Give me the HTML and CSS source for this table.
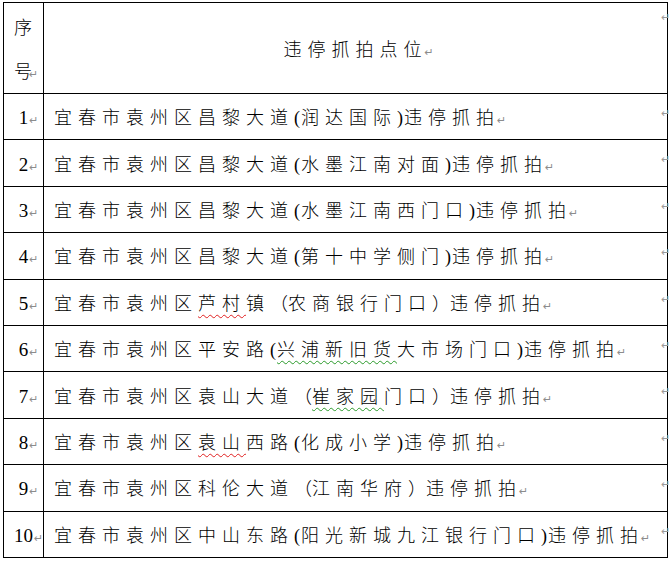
FILE: index.html
```html
<!DOCTYPE html>
<html lang="zh-CN">
<head>
<meta charset="utf-8">
<title>违停抓拍点位</title>
<link rel="stylesheet" href="styles.css">
</head>
<body>
<table class="sheet">
  <colgroup><col class="c-no"><col class="c-loc"></colgroup>
  <tr class="head">
    <td class="no-head"><div class="stack"><span>序</span><span>号<i class="pm">↵</i></span></div></td>
    <td class="loc-head">违停抓拍点位<i class="pm">↵</i></td>
  </tr>
  <tr><td class="no">1<i class="pm">↵</i></td><td class="loc">宜春市袁州区昌黎大道<b class="p">(</b>润达国际<b class="p">)</b>违停抓拍<i class="pm">↵</i></td></tr>
  <tr><td class="no">2<i class="pm">↵</i></td><td class="loc">宜春市袁州区昌黎大道<b class="p">(</b>水墨江南对面<b class="p">)</b>违停抓拍<i class="pm">↵</i></td></tr>
  <tr><td class="no">3<i class="pm">↵</i></td><td class="loc">宜春市袁州区昌黎大道<b class="p">(</b>水墨江南西门口<b class="p">)</b>违停抓拍<i class="pm">↵</i></td></tr>
  <tr><td class="no">4<i class="pm">↵</i></td><td class="loc">宜春市袁州区昌黎大道<b class="p">(</b>第十中学侧门<b class="p">)</b>违停抓拍<i class="pm">↵</i></td></tr>
  <tr><td class="no">5<i class="pm">↵</i></td><td class="loc">宜春市袁州区<span class="spell">芦村</span>镇<b class="fp">（</b>农商银行门口<b class="fp">）</b>违停抓拍<i class="pm">↵</i></td></tr>
  <tr><td class="no">6<i class="pm">↵</i></td><td class="loc">宜春市袁州区平安路<b class="p">(</b><span class="gram">兴浦新旧货</span>大市场门口<b class="p">)</b>违停抓拍<i class="pm">↵</i></td></tr>
  <tr><td class="no">7<i class="pm">↵</i></td><td class="loc">宜春市袁州区袁山大道<b class="fp">（</b><span class="gram">崔家园</span>门口<b class="fp">）</b>违停抓拍<i class="pm">↵</i></td></tr>
  <tr><td class="no">8<i class="pm">↵</i></td><td class="loc">宜春市袁州区<span class="spell">袁山</span>西路<b class="p">(</b>化成小学<b class="p">)</b>违停抓拍<i class="pm">↵</i></td></tr>
  <tr><td class="no">9<i class="pm">↵</i></td><td class="loc">宜春市袁州区科伦大道<b class="fp">（</b>江南华府<b class="fp">）</b>违停抓拍<i class="pm">↵</i></td></tr>
  <tr><td class="no">10<i class="pm">↵</i></td><td class="loc">宜春市袁州区中山东路<b class="p">(</b>阳光新城九江银行门口<b class="p">)</b>违停抓拍<i class="pm">↵</i></td></tr>
</table>
</body>
</html>
```
FILE: styles.css
```css
html, body {
  margin: 0;
  padding: 0;
  background: #fff;
}
body {
  padding: 2px 0 0 3px;
  font-family: "Liberation Serif", "Noto Sans CJK SC", serif;
  color: #000;
}
.sheet {
  border-collapse: collapse;
  table-layout: fixed;
  width: 665px;
}
.c-no { width: 40px; }
.sheet td {
  border: 1px solid #000;
  padding: 0;
  vertical-align: middle;
  position: relative;
  white-space: nowrap;
  overflow: visible;
}
.head td { height: 90px; }
.sheet tr:not(.head) td {
  height: 46.4px;
  box-sizing: border-box;
  padding-top: 6px;
}
.sheet td.loc::after,
.sheet td.loc-head::after {
  content: "↵";
  position: absolute;
  right: -9px;
  top: 8px;
  font-size: 11px;
  color: #9a9a9a;
  font-family: "DejaVu Sans", sans-serif;
}
.no-head {
  vertical-align: top !important;
}
.stack {
  display: flex;
  flex-direction: column;
  padding: 1px 0 0 10px;
  font-family: "Noto Sans CJK SC", sans-serif;
  font-weight: 300;
  font-size: 18px;
  line-height: 44px;
}
.stack span { display: block; height: 44px; }
.loc-head {
  text-align: center;
  font-family: "Noto Sans CJK SC", sans-serif;
  font-weight: 300;
  font-size: 18px;
  letter-spacing: 6px;
  padding-left: 6px !important;
}
.no {
  text-align: center;
  padding-left: 10px !important;
  font-size: 19px;
  line-height: 24px;
}
.loc {
  padding-left: 10px !important;
  font-family: "Liberation Serif", "Noto Sans CJK SC", serif;
  font-weight: 300;
  font-size: 18px;
  letter-spacing: 6px;
  line-height: 24px;
}
.p {
  font-weight: 300;
  letter-spacing: 1px;
}
.fp {
  font-weight: 300;
  letter-spacing: 0;
}
.pm {
  font-style: normal;
  font-weight: 400;
  font-family: "DejaVu Sans", sans-serif;
  font-size: 11px;
  color: #8c8c8c;
  letter-spacing: 0;
  margin-left: -3px;
}
.no .pm { margin-left: 1px; }
.spell {
  text-decoration: underline wavy #e02020;
  text-decoration-thickness: 1px;
  text-underline-offset: 4px;
}
.gram {
  text-decoration: underline wavy #2a9a2a;
  text-decoration-thickness: 1px;
  text-underline-offset: 4px;
}
```
